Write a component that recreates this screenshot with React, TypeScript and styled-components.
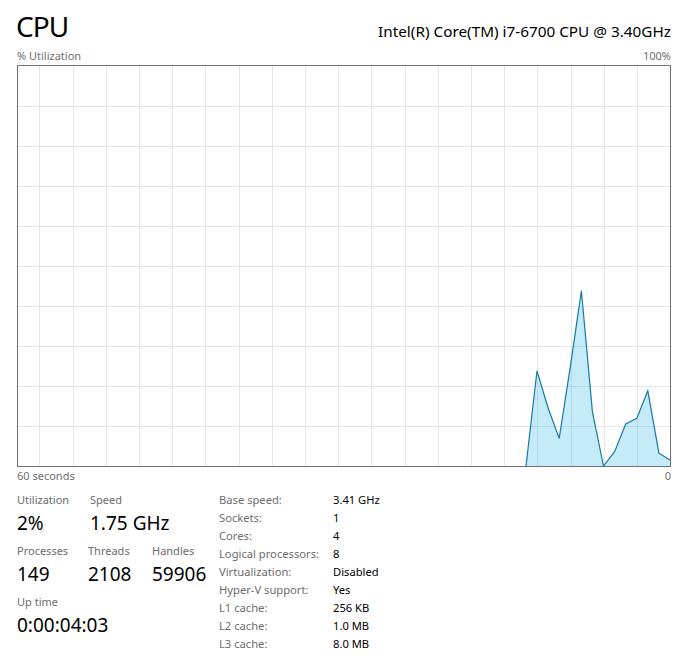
import React from "react";
import styled, { createGlobalStyle } from "styled-components";

const Global = createGlobalStyle`
  html, body { margin: 0; padding: 0; background: #ffffff; }
  body { font-family: "Segoe UI", "Noto Sans", "Open Sans", sans-serif; color: #000; }
`;

const Page = styled.div`
  width: 687px;
  height: 667px;
  box-sizing: border-box;
  padding: 0 16px 0 17px;
  overflow: hidden;
`;

const TitleRow = styled.div`
  height: 46px;
  box-sizing: border-box;
  padding-top: 7px;
  display: flex;
  justify-content: space-between;
  align-items: baseline;
`;

const Title = styled.div`
  font-size: 28px;
  line-height: 38px;
  letter-spacing: -1px;
  margin-left: -1px;
  font-weight: 400;
`;

const Model = styled.div`
  font-size: 15.3px;
  line-height: 22px;
`;

const CaptionRow = styled.div<{ $h: number }>`
  height: ${(p) => p.$h}px;
  display: flex;
  justify-content: space-between;
  font-size: 11px;
  line-height: ${(p) => p.$h}px;
  color: #707070;
`;

const Graph = styled.div`
  height: 402px;
  box-sizing: border-box;
  border: 1px solid #707070;
  background: #fff;
`;

const Chart = styled.svg`
  display: block;
  width: 652px;
  height: 400px;
`;

const Stats = styled.div`
  display: flex;
  padding-top: 8px;
`;

const LeftCol = styled.div`
  width: 202px;
  display: flex;
  flex-direction: column;
`;

const StatRow = styled.div`
  display: flex;
  height: 51px;
`;

const StatCell = styled.div<{ $w?: number }>`
  width: ${(p) => (p.$w ? `${p.$w}px` : "auto")};
  display: flex;
  flex-direction: column;
`;

const StatLabel = styled.div`
  font-size: 11px;
  line-height: 16px;
  color: #6d6d6d;
  white-space: nowrap;
`;

const StatValue = styled.div`
  font-size: 19px;
  line-height: 26px;
  margin-top: 2px;
  white-space: nowrap;
`;

const Details = styled.div`
  display: grid;
  grid-template-columns: 114px auto;
  grid-auto-rows: 18px;
  margin-top: -1px;
  font-size: 11.2px;
  line-height: 18px;
`;

const DLabel = styled.div`
  color: #6d6d6d;
  white-space: nowrap;
`;

const DValue = styled.div`
  color: #000;
  white-space: nowrap;
`;

const W = 652;
const H = 400;
const values = [0, 23.8, 14.5, 6.9, 24.8, 43.8, 13.6, 0, 3.6, 10.5, 11.9, 18.8, 3.2, 1.5];
const step = 11.08;
const pts = values.map((v, i) => [W - (values.length - 1 - i) * step, H * (1 - v / 100)]);
const linePath = pts.map((p, i) => `${i ? "L" : "M"}${p[0].toFixed(1)} ${p[1].toFixed(1)}`).join(" ");
const fillPath = `${linePath} L${W} ${H} L${pts[0][0].toFixed(1)} ${H} Z`;

const vLines = Array.from({ length: 19 }, (_, k) => Math.round(21.3 + 33.2 * k));
const hLines = Array.from({ length: 9 }, (_, k) => 40 * (k + 1));

const details: [string, string][] = [
  ["Base speed:", "3.41 GHz"],
  ["Sockets:", "1"],
  ["Cores:", "4"],
  ["Logical processors:", "8"],
  ["Virtualization:", "Disabled"],
  ["Hyper-V support:", "Yes"],
  ["L1 cache:", "256 KB"],
  ["L2 cache:", "1.0 MB"],
  ["L3 cache:", "8.0 MB"],
];

export default function App() {
  return (
    <Page>
      <Global />
      <TitleRow>
        <Title>CPU</Title>
        <Model>Intel(R) Core(TM) i7-6700 CPU @ 3.40GHz</Model>
      </TitleRow>
      <CaptionRow $h={19}>
        <span>% Utilization</span>
        <span>100%</span>
      </CaptionRow>
      <Graph>
        <Chart viewBox={`0 0 ${W} ${H}`}>
          {vLines.map((x) => (
            <rect key={`v${x}`} x={x} y={0} width={1} height={H} fill="#e6e6e6" />
          ))}
          {hLines.map((y) => (
            <rect key={`h${y}`} x={0} y={y} width={W} height={1} fill="#e6e6e6" />
          ))}
          <path d={fillPath} fill="rgb(62,185,232)" fillOpacity={0.3} />
          <path d={linePath} fill="none" stroke="#157aa6" strokeWidth={1.2} strokeLinejoin="miter" />
        </Chart>
      </Graph>
      <CaptionRow $h={17}>
        <span>60 seconds</span>
        <span>0</span>
      </CaptionRow>
      <Stats>
        <LeftCol>
          <StatRow>
            <StatCell $w={73}>
              <StatLabel>Utilization</StatLabel>
              <StatValue>2%</StatValue>
            </StatCell>
            <StatCell>
              <StatLabel>Speed</StatLabel>
              <StatValue>1.75 GHz</StatValue>
            </StatCell>
          </StatRow>
          <StatRow>
            <StatCell $w={71}>
              <StatLabel>Processes</StatLabel>
              <StatValue>149</StatValue>
            </StatCell>
            <StatCell $w={64}>
              <StatLabel>Threads</StatLabel>
              <StatValue>2108</StatValue>
            </StatCell>
            <StatCell>
              <StatLabel>Handles</StatLabel>
              <StatValue>59906</StatValue>
            </StatCell>
          </StatRow>
          <StatRow>
            <StatCell>
              <StatLabel>Up time</StatLabel>
              <StatValue>0:00:04:03</StatValue>
            </StatCell>
          </StatRow>
        </LeftCol>
        <Details>
          {details.map(([l, v]) => (
            <React.Fragment key={l}>
              <DLabel>{l}</DLabel>
              <DValue>{v}</DValue>
            </React.Fragment>
          ))}
        </Details>
      </Stats>
    </Page>
  );
}
